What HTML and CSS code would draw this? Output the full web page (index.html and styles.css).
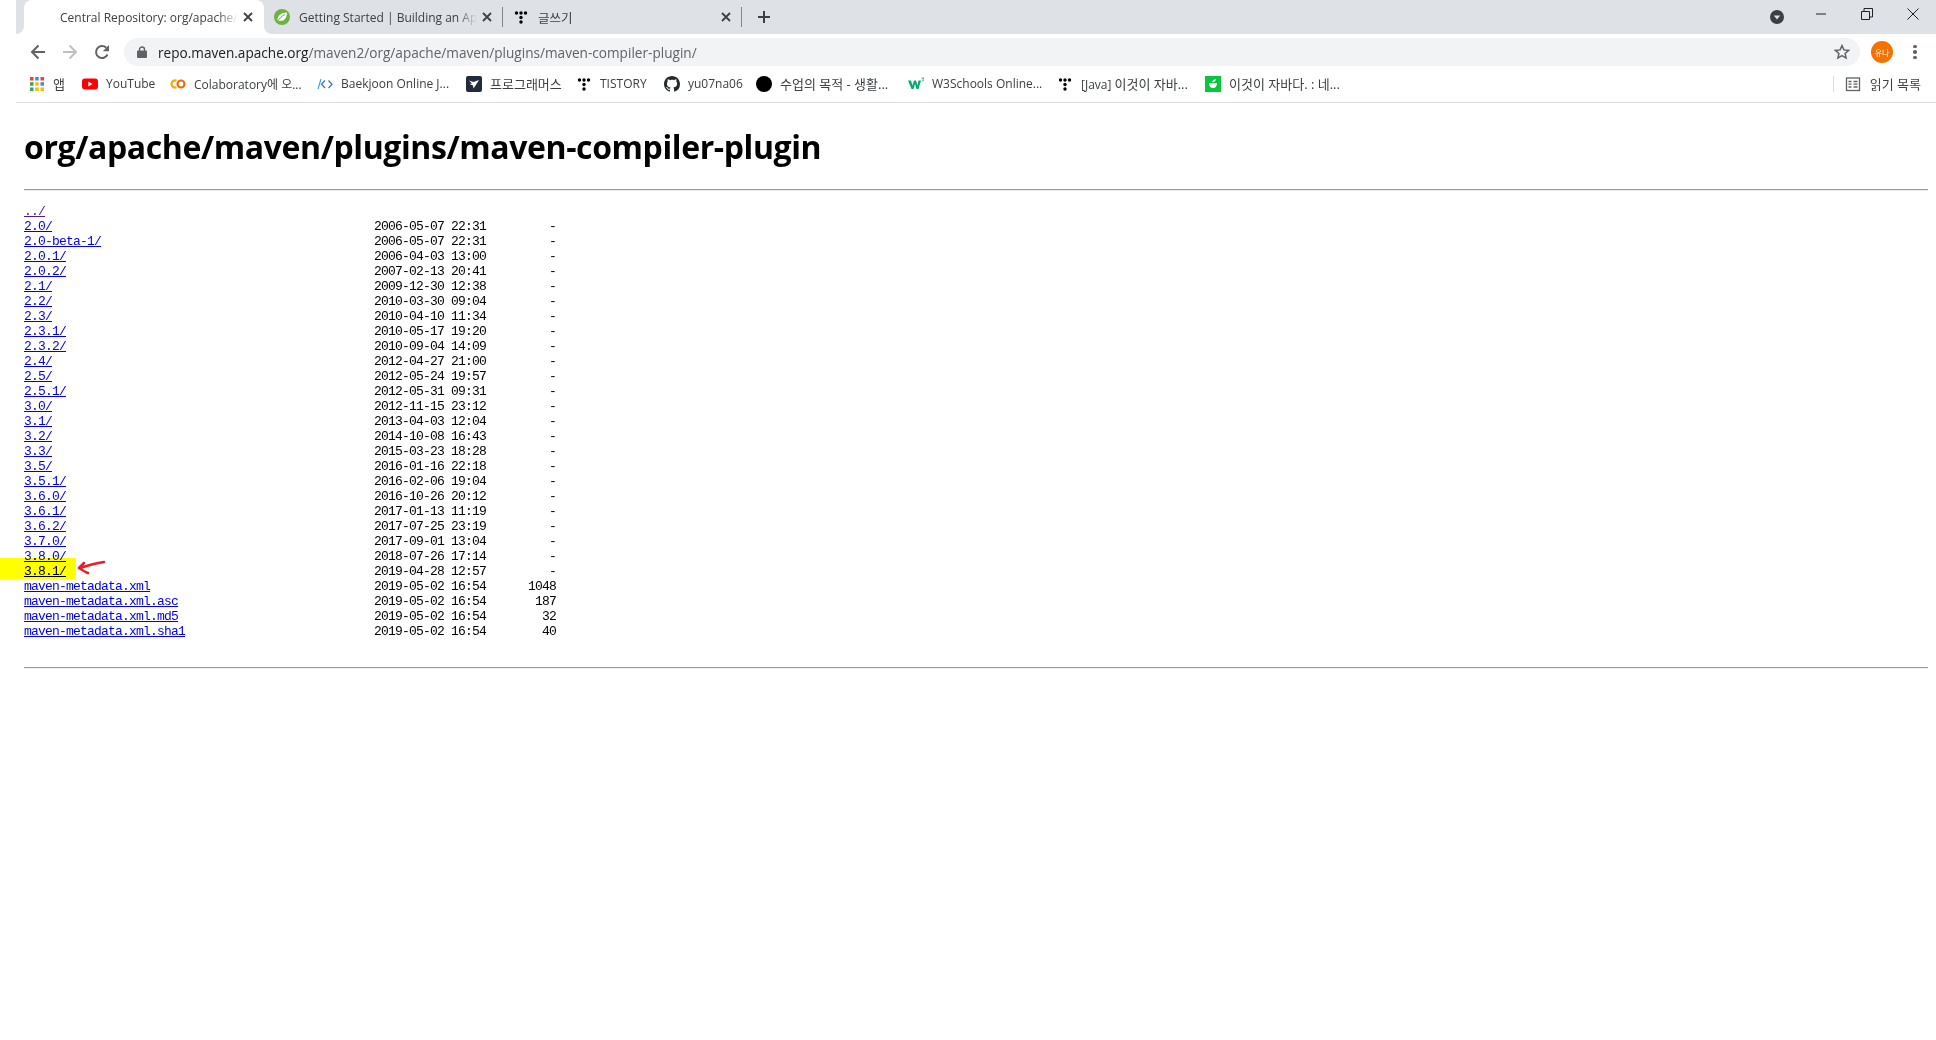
FILE: index.html
```html
<!DOCTYPE html>
<html lang="ko">
<head>
<meta charset="utf-8">
<title>Central Repository: org/apache/maven/plugins/maven-compiler-plugin</title>
<link rel="stylesheet" href="styles.css">
</head>
<body>
<svg class="sprite" width="0" height="0" aria-hidden="true">
  <symbol id="tistory" viewBox="0 0 16 16">
    <circle cx="3.5" cy="4" r="1.7"/><circle cx="8" cy="4" r="1.7"/><circle cx="12.5" cy="4" r="1.7"/>
    <circle cx="8" cy="8.5" r="1.7"/><circle cx="8" cy="13" r="1.7"/>
  </symbol>
  <symbol id="close" viewBox="0 0 12 12">
    <path d="M2 2l8 8M10 2l-8 8" fill="none" stroke="currentColor" stroke-width="1.8"/>
  </symbol>
</svg>

<div class="frame">
  <header class="tabstrip">
    <div class="tab active">
      <span class="favicon"></span>
      <span class="tab-title">Central Repository: org/apache/</span>
      <svg class="tab-close"><use href="#close"/></svg>
    </div>
    <div class="tab sep">
      <svg class="favicon" viewBox="0 0 16 16"><circle cx="8" cy="8" r="8" fill="#6db33f"/><path d="M3.500 11.500C3 6.500 7.500 3.500 13 3.500c0 5-2.500 8.500-7 8.500-1 0-2-.2-2.500-.5z" fill="#fff"/><path d="M4 12c1.500-3 4-5 7-6.500" fill="none" stroke="#6db33f" stroke-width="1"/></svg>
      <span class="tab-title">Getting Started | Building an Ap</span>
      <svg class="tab-close"><use href="#close"/></svg>
    </div>
    <div class="tab sep">
      <svg class="favicon"><use href="#tistory"/></svg>
      <span class="tab-title ko">글쓰기</span>
      <svg class="tab-close"><use href="#close"/></svg>
    </div>
    <div class="newtab"><svg width="14" height="14" viewBox="0 0 14 14"><path d="M7 1v12M1 7h12" stroke="#3c4043" stroke-width="2"/></svg></div>
    <div class="window-controls">
      <svg class="tabsearch" width="14" height="14" viewBox="0 0 14 14"><circle cx="7" cy="7" r="7" fill="#3c4043"/><path d="M3.800 5.500h6.400L7 9.500z" fill="#dee1e6"/></svg>
      <div class="winbtn"><svg width="12" height="12" viewBox="0 0 12 12"><path d="M1 6h10" stroke="#202124"/></svg></div>
      <div class="winbtn"><svg width="12" height="12" viewBox="0 0 12 12"><path d="M.5 3.500h8v8h-8zM3 3.500V.5h8.500V9H8.500" fill="none" stroke="#202124"/></svg></div>
      <div class="winbtn"><svg width="12" height="12" viewBox="0 0 12 12"><path d="M.5.5l11 11M11.500.5l-11 11" stroke="#202124"/></svg></div>
    </div>
  </header>

  <nav class="toolbar">
    <div class="navbtn"><svg width="16" height="16" viewBox="0 0 16 16"><path d="M15 8H2M8.500 1.500L2 8l6.500 6.500" fill="none" stroke="#5f6368" stroke-width="2"/></svg></div>
    <div class="navbtn"><svg width="16" height="16" viewBox="0 0 16 16"><path d="M1 8h13M7.500 1.500L14 8l-6.500 6.500" fill="none" stroke="#bdc1c6" stroke-width="2"/></svg></div>
    <div class="navbtn"><svg width="16" height="16" viewBox="0 0 16 16"><path d="M13.500 10.500A6 6 0 1 1 12.300 3.800" fill="none" stroke="#5f6368" stroke-width="2"/><path d="M15 1v6.200H8.800z" fill="#5f6368"/></svg></div>
    <div class="omnibox">
      <svg class="lock" width="10" height="12" viewBox="0 0 10 12"><path d="M2.500 5V3.500a2.500 2.500 0 0 1 5 0V5" fill="none" stroke="#5f6368" stroke-width="1.400"/><rect y="4.500" width="10" height="7.500" rx="1" fill="#5f6368"/></svg>
      <span class="url"><span class="host">repo.maven.apache.org</span>/maven2/org/apache/maven/plugins/maven-compiler-plugin/</span>
      <svg class="star" width="16" height="16" viewBox="0 0 16 16"><path d="M8 1.600l1.900 4.300 4.700.5-3.500 3.100 1 4.600L8 11.700l-4.100 2.400 1-4.600-3.500-3.100 4.700-.5z" fill="none" stroke="#5f6368" stroke-width="1.500"/></svg>
    </div>
    <div class="avatar">유나</div>
    <div class="menu"><i></i><i></i><i></i></div>
  </nav>

  <nav class="bookmarks">
    <div class="bm b-apps">
      <svg class="bi" viewBox="0 0 16 16">
        <rect x="1" y="1" width="3.500" height="3.500" fill="#ea4335"/><rect x="6.200" y="1" width="3.500" height="3.500" fill="#4285f4"/><rect x="11.500" y="1" width="3.500" height="3.500" fill="#ea4335"/>
        <rect x="1" y="6.200" width="3.500" height="3.500" fill="#34a853"/><rect x="6.200" y="6.200" width="3.500" height="3.500" fill="#fbbc04"/><rect x="11.500" y="6.200" width="3.500" height="3.500" fill="#4285f4"/>
        <rect x="1" y="11.500" width="3.500" height="3.500" fill="#34a853"/><rect x="6.200" y="11.500" width="3.500" height="3.500" fill="#fbbc04"/><rect x="11.500" y="11.500" width="3.500" height="3.500" fill="#fbbc04"/>
      </svg>
      <span class="bl ko">앱</span>
    </div>
    <div class="bm b-yt">
      <svg class="bi" viewBox="0 0 16 16"><rect y="2.500" width="16" height="11" rx="3" fill="#f00"/><path d="M6.300 5.500v5L10.500 8z" fill="#fff"/></svg>
      <span class="bl">YouTube</span>
    </div>
    <div class="bm b-colab">
      <svg class="bi" viewBox="0 0 16 16"><path d="M6.500 4.700A3.600 3.600 0 1 0 6.500 11.300" fill="none" stroke="#f9ab00" stroke-width="2.200"/><circle cx="11" cy="8" r="3.500" fill="none" stroke="#e8710a" stroke-width="2.200"/></svg>
      <span class="bl">Colaboratory에 오...</span>
    </div>
    <div class="bm b-boj">
      <svg class="bi" viewBox="0 0 16 16"><path d="M4 3L1 13" fill="none" stroke="#4aa3df" stroke-width="1.200"/><path d="M8 4.500L4.500 8.300 8 12M11.500 4.500L15 8.300 11.500 12" fill="none" stroke="#3b78c2" stroke-width="1.300"/></svg>
      <span class="bl">Baekjoon Online J...</span>
    </div>
    <div class="bm b-prog">
      <svg class="bi" viewBox="0 0 16 16"><rect width="16" height="16" rx="2" fill="#202b3d"/><path d="M3 4.500l4.500 1.500L13 4l-2.500 4-3 4.500-.5-3L3.500 8l2.500-.5z" fill="#fff"/></svg>
      <span class="bl ko">프로그래머스</span>
    </div>
    <div class="bm b-tis">
      <svg class="bi"><use href="#tistory"/></svg>
      <span class="bl">TISTORY</span>
    </div>
    <div class="bm b-gh">
      <svg class="bi" viewBox="0 0 16 16"><path d="M8 0C3.580 0 0 3.580 0 8c0 3.540 2.290 6.530 5.470 7.590.4.070.55-.17.55-.38 0-.19-.01-.82-.01-1.490-2.010.37-2.530-.49-2.690-.94-.09-.23-.48-.94-.82-1.130-.28-.15-.68-.52-.01-.53.63-.01 1.080.58 1.230.82.720 1.210 1.870.87 2.330.66.070-.52.280-.87.510-1.070-1.780-.2-3.640-.89-3.640-3.950 0-.87.310-1.590.820-2.150-.08-.2-.36-1.020.08-2.120 0 0 .67-.21 2.200.82.640-.18 1.320-.27 2-.27s1.360.09 2 .27c1.530-1.040 2.200-.82 2.200-.82.440 1.100.16 1.920.08 2.120.51.560.82 1.270.82 2.150 0 3.070-1.870 3.750-3.650 3.950.29.250.54.730.54 1.480 0 1.070-.01 1.930-.01 2.200 0 .210.150.460.550.380A8.010 8.010 0 0 0 16 8c0-4.420-3.580-8-8-8z" fill="#24292e"/></svg>
      <span class="bl">yu07na06</span>
    </div>
    <div class="bm b-blk">
      <svg class="bi" viewBox="0 0 16 16"><circle cx="8" cy="8" r="8" fill="#000"/></svg>
      <span class="bl ko">수업의 목적 - 생활...</span>
    </div>
    <div class="bm b-w3">
      <svg class="bi" viewBox="0 0 16 16"><path d="M0 4.500h3l1.500 5 1.500-5h2l1.500 5 1-5h2.500L10.500 13H8.500L7 8l-1.500 5h-2z" fill="#04aa6d"/><path d="M13.500 2h2.300l-1 1.300c.6.200.9.600.7 1.200-.2.500-1 .7-1.800.4" fill="none" stroke="#04aa6d" stroke-width=".8"/></svg>
      <span class="bl">W3Schools Online...</span>
    </div>
    <div class="bm b-java">
      <svg class="bi"><use href="#tistory"/></svg>
      <span class="bl">[Java] <span class="ko">이것이 자바...</span></span>
    </div>
    <div class="bm b-naver">
      <svg class="bi" viewBox="0 0 16 16"><rect width="16" height="16" fill="#0bc43f"/><path d="M4 7h8c0 3-1.500 5-4 5S4 10 4 7z" fill="#fff"/><path d="M7 6.200c.5-2 2-3 4-3-.3 1.800-1.800 3-4 3z" fill="#fff"/></svg>
      <span class="bl ko">이것이 자바다. : 네...</span>
    </div>
    <div class="reading">
      <svg class="bi" viewBox="0 0 16 16"><rect x="1.500" y="2" width="13" height="12.500" fill="none" stroke="#5f6368" stroke-width="1.300"/><path d="M3.500 5.500h3M3.500 8.200h3M3.500 11h3M8.500 5.500h4M8.500 8.200h4M8.500 11h4" stroke="#5f6368" stroke-width="1.300"/></svg>
      <span class="bl ko">읽기 목록</span>
    </div>
  </nav>

  <main class="page">
    <h1 class="heading">org/apache/maven/plugins/maven-compiler-plugin</h1>
    <hr class="rule">
    <div class="listing">
      <div class="row"><a class="visited" href="#">../</a></div>
      <div class="row"><a href="#">2.0/</a><span>2006-05-07 22:31</span><span class="size">-</span></div>
      <div class="row"><a href="#">2.0-beta-1/</a><span>2006-05-07 22:31</span><span class="size">-</span></div>
      <div class="row"><a href="#">2.0.1/</a><span>2006-04-03 13:00</span><span class="size">-</span></div>
      <div class="row"><a href="#">2.0.2/</a><span>2007-02-13 20:41</span><span class="size">-</span></div>
      <div class="row"><a href="#">2.1/</a><span>2009-12-30 12:38</span><span class="size">-</span></div>
      <div class="row"><a href="#">2.2/</a><span>2010-03-30 09:04</span><span class="size">-</span></div>
      <div class="row"><a href="#">2.3/</a><span>2010-04-10 11:34</span><span class="size">-</span></div>
      <div class="row"><a href="#">2.3.1/</a><span>2010-05-17 19:20</span><span class="size">-</span></div>
      <div class="row"><a href="#">2.3.2/</a><span>2010-09-04 14:09</span><span class="size">-</span></div>
      <div class="row"><a href="#">2.4/</a><span>2012-04-27 21:00</span><span class="size">-</span></div>
      <div class="row"><a href="#">2.5/</a><span>2012-05-24 19:57</span><span class="size">-</span></div>
      <div class="row"><a href="#">2.5.1/</a><span>2012-05-31 09:31</span><span class="size">-</span></div>
      <div class="row"><a href="#">3.0/</a><span>2012-11-15 23:12</span><span class="size">-</span></div>
      <div class="row"><a href="#">3.1/</a><span>2013-04-03 12:04</span><span class="size">-</span></div>
      <div class="row"><a href="#">3.2/</a><span>2014-10-08 16:43</span><span class="size">-</span></div>
      <div class="row"><a href="#">3.3/</a><span>2015-03-23 18:28</span><span class="size">-</span></div>
      <div class="row"><a href="#">3.5/</a><span>2016-01-16 22:18</span><span class="size">-</span></div>
      <div class="row"><a href="#">3.5.1/</a><span>2016-02-06 19:04</span><span class="size">-</span></div>
      <div class="row"><a href="#">3.6.0/</a><span>2016-10-26 20:12</span><span class="size">-</span></div>
      <div class="row"><a href="#">3.6.1/</a><span>2017-01-13 11:19</span><span class="size">-</span></div>
      <div class="row"><a href="#">3.6.2/</a><span>2017-07-25 23:19</span><span class="size">-</span></div>
      <div class="row"><a href="#">3.7.0/</a><span>2017-09-01 13:04</span><span class="size">-</span></div>
      <div class="row"><a href="#">3.8.0/</a><span>2018-07-26 17:14</span><span class="size">-</span></div>
      <div class="row"><a href="#">3.8.1/</a><span>2019-04-28 12:57</span><span class="size">-</span></div>
      <div class="row"><a href="#">maven-metadata.xml</a><span>2019-05-02 16:54</span><span class="size">1048</span></div>
      <div class="row"><a href="#">maven-metadata.xml.asc</a><span>2019-05-02 16:54</span><span class="size">187</span></div>
      <div class="row"><a href="#">maven-metadata.xml.md5</a><span>2019-05-02 16:54</span><span class="size">32</span></div>
      <div class="row"><a href="#">maven-metadata.xml.sha1</a><span>2019-05-02 16:54</span><span class="size">40</span></div>
    </div>
    <hr class="rule rule-end">
  </main>
</div>

<div class="highlight"></div>
<svg class="arrow" width="30" height="18" viewBox="0 0 30 18"><path d="M27 2C20 3 12 5 3 8M7 3L2 8c3 2 6 4 9 5" fill="none" stroke="#ed1c24" stroke-width="2.500" stroke-linecap="round" stroke-linejoin="round"/></svg>
</body>
</html>
```

FILE: styles.css
```css
* { box-sizing: border-box; }
html, body { margin: 0; padding: 0; height: 100%; background: #fff; }
body {
  position: relative;
  overflow: hidden;
  font-family: "Open Sans", "Noto Sans CJK KR", sans-serif;
  color: #000;
}
.sprite { display: block; height: 0; }
.frame { margin-left: 16px; }
.ko { font-size: 13px; }

/* tab strip */
.tabstrip {
  display: flex;
  align-items: stretch;
  height: 34px;
  padding-left: 8px;
  background: #dee1e6;
}
.tab {
  position: relative;
  display: flex;
  align-items: center;
  width: 239px;
  padding: 0 10px;
  font-size: 12px;
  color: #3c4043;
}
.tab.active {
  width: 240px;
  padding-left: 12px;
  background: #fff;
  border-radius: 8px 8px 0 0;
}
.tab.active .favicon { margin-right: 8px; }
.tab.active::before,
.tab.active::after {
  content: "";
  position: absolute;
  bottom: 0;
  width: 8px;
  height: 8px;
}
.tab.active::before {
  left: -8px;
  background: radial-gradient(circle at 0 0, #dee1e6 7.5px, #fff 8.5px);
}
.tab.active::after {
  right: -8px;
  background: radial-gradient(circle at 100% 0, #dee1e6 7.5px, #fff 8.5px);
}
.tab.sep::after {
  content: "";
  position: absolute;
  right: 0;
  top: 7px;
  bottom: 7px;
  width: 1px;
  background: #80868b;
}
.favicon { flex: none; width: 16px; height: 16px; margin-right: 9px; }
.tab-title {
  flex: 1;
  min-width: 0;
  white-space: nowrap;
  overflow: hidden;
  padding-right: 4px;
  -webkit-mask-image: linear-gradient(to right, #000 calc(100% - 24px), transparent calc(100% - 4px));
  mask-image: linear-gradient(to right, #000 calc(100% - 24px), transparent calc(100% - 4px));
}
.tab-title.ko { font-size: 12.500px; }
.tab-close { flex: none; width: 12px; height: 12px; color: #3c4043; }
.newtab { width: 44px; display: flex; align-items: center; justify-content: center; }
.window-controls { margin-left: auto; display: flex; align-items: flex-start; }
.tabsearch { margin: 10px 14px 0 0; }
.winbtn { width: 46px; height: 28px; display: flex; align-items: center; justify-content: center; }

/* toolbar */
.toolbar {
  display: flex;
  align-items: center;
  height: 37px;
  padding: 4px 0 5px 8px;
  gap: 4px;
}
.navbtn { width: 28px; height: 28px; display: flex; align-items: center; justify-content: center; }
.omnibox {
  flex: 1;
  height: 28px;
  margin-left: 4px;
  display: flex;
  align-items: center;
  padding: 0 10px 0 13px;
  background: #f1f3f4;
  border-radius: 14px;
}
.lock { flex: none; margin-right: 11px; }
.url { flex: 1; font-size: 13.620px; color: #5f6368; white-space: nowrap; }
.host { color: #202124; }
.star { flex: none; }
.avatar {
  flex: none;
  width: 22px;
  height: 22px;
  margin-left: 7px;
  border-radius: 50%;
  background: #f57100;
  color: #fff;
  font-size: 8px;
  display: flex;
  align-items: center;
  justify-content: center;
  white-space: nowrap;
}
.menu { flex: none; width: 4px; margin: 0 19px 0 16px; display: flex; flex-direction: column; gap: 2px; }
.menu i { display: block; width: 3.500px; height: 3.500px; border-radius: 50%; background: #5f6368; }

/* bookmarks */
.bookmarks {
  display: flex;
  align-items: center;
  height: 32px;
  padding: 0 0 6px 13px;
  border-bottom: 1px solid #dadce0;
  font-size: 12px;
  color: #3c4043;
}
.bm { display: flex; align-items: center; gap: 8px; flex: none; }
.bi { flex: none; width: 16px; height: 16px; }
.bl { white-space: nowrap; }
.b-apps { width: 53px; }
.b-yt { width: 88px; }
.b-colab { width: 147px; }
.b-boj { width: 149px; }
.b-prog { width: 110px; }
.b-tis { width: 88px; }
.b-gh { width: 92px; }
.b-blk { width: 152px; }
.b-w3 { width: 149px; }
.b-java { width: 148px; }
.b-naver { width: 150px; }
.reading {
  margin-left: auto;
  margin-right: 15px;
  display: flex;
  align-items: center;
  gap: 9px;
  padding-left: 11px;
  border-left: 1px solid #dadce0;
  height: 16px;
}

/* page */
.page { padding: 0 8px; }
.heading {
  margin: 0;
  padding-top: 22px;
  height: 86px;
  font-family: "Open Sans", "Noto Sans CJK KR", sans-serif;
  font-size: 32px;
  line-height: 44px;
  font-weight: 700;
  letter-spacing: -0.4px;
  white-space: nowrap;
}
.rule {
  margin: 0;
  height: 2px;
  border: 0;
  border-top: 1px solid #9a9a9a;
  border-bottom: 1px solid #eee;
}
.listing {
  margin-top: 13px;
  font-family: "Liberation Mono", monospace;
  font-size: 13px;
  letter-spacing: -0.800px;
  line-height: 15px;
}
.row { display: grid; grid-template-columns: 350px 112px 70px; height: 15px; white-space: pre; }
.row a { justify-self: start; color: #00e; }
.row a.visited { color: #551a8b; }
.size { text-align: right; }
.rule-end { margin-top: 28px; }

/* annotations */
.highlight {
  position: absolute;
  left: 0;
  top: 558px;
  width: 76px;
  height: 21px;
  background: #ffff00;
  mix-blend-mode: multiply;
}
.arrow { position: absolute; left: 77px; top: 560px; }
```
